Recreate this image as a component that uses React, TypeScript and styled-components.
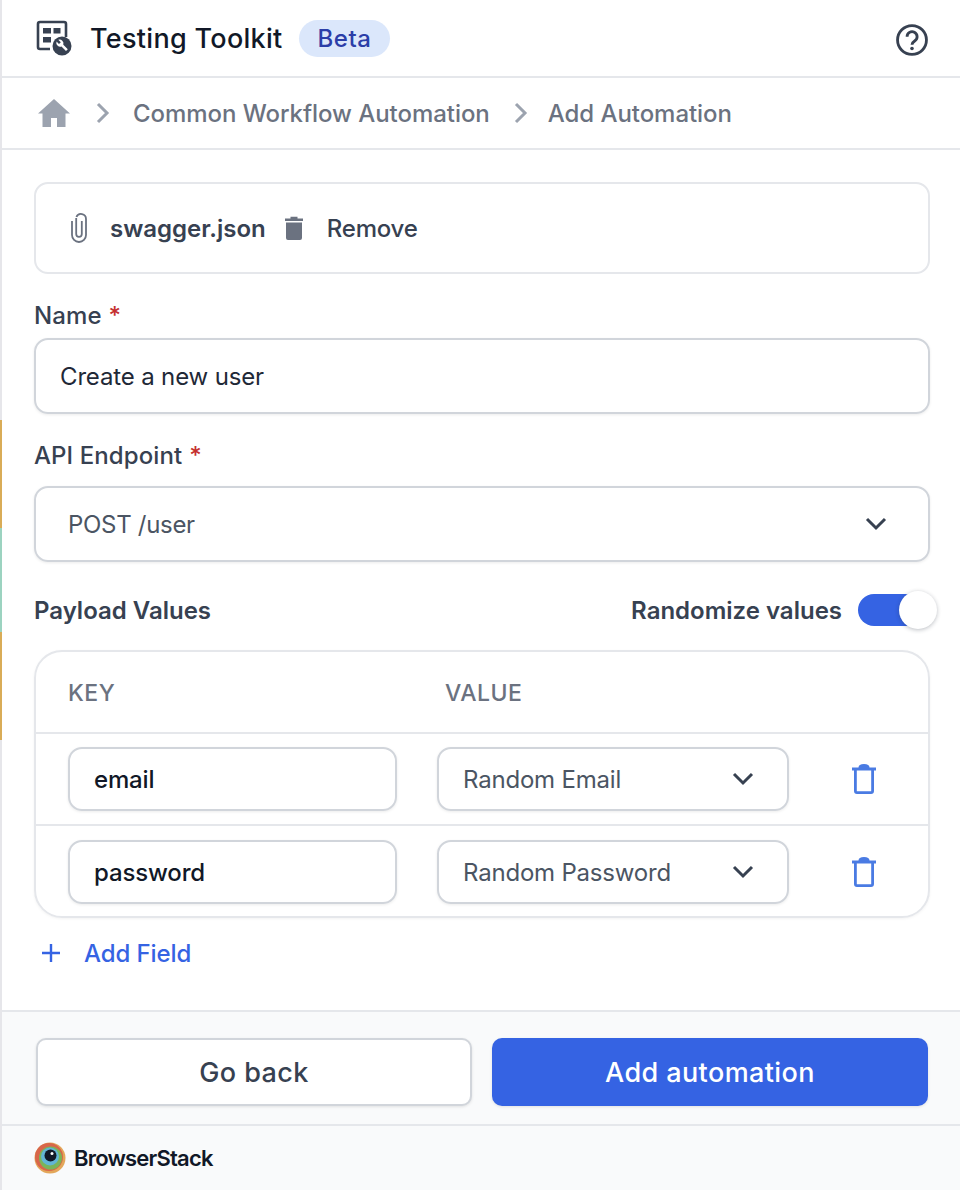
import styled, { createGlobalStyle } from "styled-components";

const Global = createGlobalStyle`
  * { box-sizing: border-box; }
  html, body { margin: 0; padding: 0; background: #fff; }
  body { font-family: Inter, "Liberation Sans", sans-serif; color: #374151; }
`;

const Shell = styled.div`
  width: 960px;
  height: 1190px;
  display: flex;
  overflow: hidden;
`;

const Strip = styled.div`
  width: 2px;
  flex: none;
  display: flex;
  flex-direction: column;
  background: #e6e6ea;
`;

const StripPart = styled.div<{ $h: number; $c: string }>`
  height: ${(p) => p.$h}px;
  background: ${(p) => p.$c};
`;

const Panel = styled.div`
  flex: 1;
  min-width: 0;
  display: flex;
  flex-direction: column;
`;

const Header = styled.header`
  height: 78px;
  padding: 0 31px 0 34px;
  display: flex;
  align-items: center;
  border-bottom: 2px solid #e5e7eb;
`;

const HeaderTitle = styled.h1`
  margin: 0 0 0 18px;
  font-size: 27px;
  font-weight: 500;
  letter-spacing: 0.3px;
  color: #111827;
`;

const Badge = styled.span`
  margin-left: 16px;
  height: 37px;
  padding: 0 19px;
  display: flex;
  align-items: center;
  border-radius: 19px;
  background: #dbe7fb;
  color: #2b3ea8;
  font-size: 24px;
  font-weight: 500;
  letter-spacing: 0.5px;
`;

const HelpButton = styled.div`
  margin: 3px 0 0 auto;
  display: flex;
`;

const Crumbs = styled.nav`
  height: 72px;
  padding: 0 0 0 35px;
  display: flex;
  align-items: center;
  border-bottom: 2px solid #e5e7eb;
  font-size: 24px;
  font-weight: 500;
  letter-spacing: -0.05px;
  color: #6b7280;
`;

const CrumbSep = styled.span<{ $l: number; $r: number }>`
  display: flex;
  margin: 0 ${(p) => p.$r}px 0 ${(p) => p.$l}px;
`;

const Body = styled.main`
  flex: 1;
  padding: 32px 30px 0 32px;
  display: flex;
  flex-direction: column;
`;

const FileCard = styled.div`
  height: 92px;
  padding: 0 0 0 35px;
  display: flex;
  align-items: center;
  border: 2px solid #e5e7eb;
  border-radius: 14px;
`;

const FileName = styled.span`
  margin-left: 23px;
  font-size: 24px;
  font-weight: 600;
  color: #374151;
`;

const RemoveText = styled.span`
  margin-left: 24px;
  font-size: 24px;
  font-weight: 500;
  letter-spacing: -0.2px;
  color: #374151;
`;

const TrashSlot = styled.span`
  margin-left: 19px;
  display: flex;
`;

const Label = styled.label<{ $bottom: number }>`
  display: block;
  margin-top: 27px;
  margin-bottom: ${(p) => p.$bottom}px;
  height: 29px;
  line-height: 29px;
  font-size: 24px;
  font-weight: 500;
  letter-spacing: 0.1px;
  color: #374151;
`;

const Required = styled.span`
  margin-left: 7px;
  color: #c53030;
`;

const Field = styled.div`
  height: 76px;
  padding: 0 24px;
  display: flex;
  align-items: center;
  justify-content: space-between;
  border: 2px solid #d1d5db;
  border-radius: 14px;
  box-shadow: 0 1px 3px rgba(0, 0, 0, 0.08);
  font-size: 24px;
  letter-spacing: -0.15px;
  color: #1f2937;
`;

const SelectField = styled(Field)`
  padding: 0 41px 0 32px;
  letter-spacing: -0.3px;
  color: #4b5563;
`;

const PayloadHead = styled.div`
  margin-top: 26px;
  height: 44px;
  display: flex;
  align-items: center;
  justify-content: space-between;
  font-size: 24px;
  font-weight: 600;
  color: #374151;
`;

const RandomRow = styled.div`
  display: flex;
  align-items: center;
  gap: 16px;
`;

const Track = styled.div`
  position: relative;
  width: 64px;
  height: 32px;
  border-radius: 16px;
  background: #3563e3;
  margin-right: 8px;
`;

const Thumb = styled.div`
  position: absolute;
  right: -15px;
  top: -3px;
  width: 38px;
  height: 38px;
  border-radius: 50%;
  background: #fff;
  box-shadow: 0 1px 4px rgba(31, 41, 55, 0.3);
`;

const Table = styled.div`
  margin-top: 18px;
  border: 2px solid #e5e7eb;
  border-radius: 28px;
  box-shadow: 0 1px 3px rgba(0, 0, 0, 0.05);
`;

const TableHead = styled.div`
  height: 80px;
  padding: 2px 32px 0;
  display: grid;
  grid-template-columns: 377px 1fr;
  align-items: center;
  font-size: 23px;
  font-weight: 500;
  letter-spacing: 0.5px;
  color: #6b7280;
`;

const Row = styled.div`
  height: 92px;
  padding: 0 0 0 32px;
  display: flex;
  align-items: center;
  border-top: 2px solid #e5e7eb;

  &:last-child {
    padding-top: 2px;
  }
`;

const KeyInput = styled.div`
  width: 329px;
  height: 64px;
  padding: 0 24px;
  display: flex;
  align-items: center;
  border: 2px solid #d1d5db;
  border-radius: 14px;
  box-shadow: 0 1px 3px rgba(0, 0, 0, 0.08);
  font-size: 24px;
  font-weight: 500;
  letter-spacing: -0.15px;
  color: #111827;
`;

const ValueSelect = styled.div`
  margin-left: 40px;
  width: 352px;
  height: 64px;
  padding: 0 33px 0 24px;
  display: flex;
  align-items: center;
  justify-content: space-between;
  border: 2px solid #d1d5db;
  border-radius: 14px;
  box-shadow: 0 1px 3px rgba(0, 0, 0, 0.08);
  font-size: 24px;
  letter-spacing: -0.2px;
  color: #4b5563;
`;

const RowDelete = styled.span`
  margin-left: 63px;
  display: flex;
`;

const AddField = styled.div`
  margin-top: 19px;
  height: 32px;
  padding-left: 6px;
  display: flex;
  align-items: center;
  gap: 22px;
  font-size: 24px;
  font-weight: 500;
  letter-spacing: -0.1px;
  color: #3563e3;
`;

const Actions = styled.div`
  height: 116px;
  padding: 26px 32px 0 34px;
  display: flex;
  gap: 20px;
  background: #f9fafb;
  border-top: 2px solid #e5e7eb;
  border-bottom: 2px solid #e5e7eb;
`;

const Btn = styled.button<{ $primary?: boolean }>`
  flex: 0 0 436px;
  height: 68px;
  border-radius: 10px;
  border: ${(p) => (p.$primary ? "none" : "2px solid #d1d5db")};
  background: ${(p) => (p.$primary ? "#3563e3" : "#fff")};
  color: ${(p) => (p.$primary ? "#fff" : "#374151")};
  font-family: inherit;
  font-size: 27px;
  font-weight: 500;
  letter-spacing: 0.4px;
  box-shadow: 0 1px 3px rgba(0, 0, 0, 0.1);
`;

const Footer = styled.footer`
  height: 64px;
  padding: 0 0 0 32px;
  display: flex;
  align-items: center;
  gap: 8px;
  background: #f9fafb;
`;

const Brand = styled.span`
  font-size: 22px;
  font-weight: 600;
  letter-spacing: -0.8px;
  color: #111827;
`;

const ToolkitIcon = () => (
  <svg width="36" height="36" viewBox="0 0 36 36">
    <path d="M14 29H4a2 2 0 0 1-2-2V4a2 2 0 0 1 2-2h24a2 2 0 0 1 2 2v13" fill="none" stroke="#374151" strokeWidth="2.6" />
    <rect x="7" y="8" width="8" height="5.5" fill="#374151" />
    <rect x="17.5" y="8" width="7" height="5.5" fill="#374151" />
    <rect x="7" y="17" width="8" height="5.5" fill="#374151" />
    <circle cx="26" cy="26" r="9.5" fill="#374151" />
    <path d="M20.5 21.5a4 4 0 0 0 5 5l4.5 4.5 1.8-1.8-4.5-4.5a4 4 0 0 0-5-5l2.5 2.5-1.8 1.8z" fill="#fff" />
  </svg>
);

const HelpIcon = () => (
  <svg width="34" height="34" viewBox="0 0 36 36" fill="none">
    <circle cx="18" cy="18" r="15.3" stroke="#374151" strokeWidth="3" />
    <path d="M12.8 14.5a5.3 5.3 0 1 1 8.3 4.3c-1.9 1.3-3.1 2.2-3.1 4.2" stroke="#374151" strokeWidth="3" />
    <circle cx="18" cy="27" r="1.9" fill="#374151" />
  </svg>
);

const HomeIcon = () => (
  <svg width="34" height="30" viewBox="0 0 34 30">
    <path d="M17 1L1 15.5h4.5V29h8.5v-9h6v9h8.5V15.5H33z" fill="#9ca3af" />
  </svg>
);

const Chevron = () => (
  <svg width="14" height="22" viewBox="0 0 14 22" fill="none">
    <path d="M2 2l9 9-9 9" stroke="#9ca3af" strokeWidth="3" />
  </svg>
);

const ClipIcon = () => (
  <svg width="16" height="30" viewBox="0 0 16 30" fill="none">
    <path d="M1 8v14a7 7 0 0 0 14 0V6a5 5 0 0 0-9.6-2" stroke="#6b7280" strokeWidth="1.8" />
    <path d="M5.2 5v16a2.8 2.8 0 0 0 5.6 0V8" stroke="#6b7280" strokeWidth="1.8" />
  </svg>
);

const TrashSolid = () => (
  <svg width="18" height="24" viewBox="0 0 18 24">
    <path d="M0 2.5h5.5V.8h7v1.7H18v2.4H0zM1 6.6h16V22a2 2 0 0 1-2 2H3a2 2 0 0 1-2-2z" fill="#6b7280" />
  </svg>
);

const TrashOutline = () => (
  <svg width="24" height="30" viewBox="0 0 24 30" fill="none">
    <path d="M0 5h24" stroke="#4a7be3" strokeWidth="3" />
    <path d="M7.5 3.5a4.5 2.5 0 0 1 9 0z" fill="#4a7be3" stroke="#4a7be3" strokeWidth="2" />
    <path d="M3.4 6v21a1.6 1.6 0 0 0 1.6 1.6h14a1.6 1.6 0 0 0 1.6-1.6V6" stroke="#4a7be3" strokeWidth="2.8" />
  </svg>
);

const SelectChevron = () => (
  <svg width="22" height="14" viewBox="0 0 22 14" fill="none">
    <path d="M2 2l9 9 9-9" stroke="#374151" strokeWidth="3" />
  </svg>
);

const PlusIcon = () => (
  <svg width="22" height="22" viewBox="0 0 22 22" fill="none">
    <path d="M11 2v18M2 11h18" stroke="#3563e3" strokeWidth="2.4" />
  </svg>
);

const Logo = () => (
  <svg width="32" height="32" viewBox="0 0 32 32">
    <circle cx="16" cy="16" r="15.5" fill="#e3a75a" />
    <circle cx="15" cy="15" r="14" fill="#d8664a" />
    <circle cx="16.5" cy="16" r="11.5" fill="#7ab45a" />
    <circle cx="16" cy="14.5" r="9" fill="#62b5d6" />
    <circle cx="16.5" cy="13.5" r="6" fill="#111827" />
    <circle cx="18" cy="11.5" r="1.5" fill="#fff" />
  </svg>
);

const rows = [
  { key: "email", value: "Random Email" },
  { key: "password", value: "Random Password" },
];

export default function App() {
  return (
    <Shell>
      <Global />
      <Strip>
        <StripPart $h={420} $c="#e6e6ea" />
        <StripPart $h={108} $c="#d9ac57" />
        <StripPart $h={104} $c="#9cd3c0" />
        <StripPart $h={108} $c="#d9ac57" />
      </Strip>
      <Panel>
        <Header>
          <ToolkitIcon />
          <HeaderTitle>Testing Toolkit</HeaderTitle>
          <Badge>Beta</Badge>
          <HelpButton>
            <HelpIcon />
          </HelpButton>
        </Header>
        <Crumbs>
          <HomeIcon />
          <CrumbSep $l={25} $r={23}>
            <Chevron />
          </CrumbSep>
          <span>Common Workflow Automation</span>
          <CrumbSep $l={24} $r={20}>
            <Chevron />
          </CrumbSep>
          <span>Add Automation</span>
        </Crumbs>
        <Body>
          <FileCard>
            <ClipIcon />
            <FileName>swagger.json</FileName>
            <TrashSlot>
              <TrashSolid />
            </TrashSlot>
            <RemoveText>Remove</RemoveText>
          </FileCard>
          <Label $bottom={8}>
            Name<Required>*</Required>
          </Label>
          <Field>Create a new user</Field>
          <Label $bottom={16}>
            API Endpoint<Required>*</Required>
          </Label>
          <SelectField>
            POST /user
            <SelectChevron />
          </SelectField>
          <PayloadHead>
            <span>Payload Values</span>
            <RandomRow>
              <span>Randomize values</span>
              <Track>
                <Thumb />
              </Track>
            </RandomRow>
          </PayloadHead>
          <Table>
            <TableHead>
              <span>KEY</span>
              <span>VALUE</span>
            </TableHead>
            {rows.map((r) => (
              <Row key={r.key}>
                <KeyInput>{r.key}</KeyInput>
                <ValueSelect>
                  {r.value}
                  <SelectChevron />
                </ValueSelect>
                <RowDelete>
                  <TrashOutline />
                </RowDelete>
              </Row>
            ))}
          </Table>
          <AddField>
            <PlusIcon />
            Add Field
          </AddField>
        </Body>
        <Actions>
          <Btn>Go back</Btn>
          <Btn $primary>Add automation</Btn>
        </Actions>
        <Footer>
          <Logo />
          <Brand>BrowserStack</Brand>
        </Footer>
      </Panel>
    </Shell>
  );
}
